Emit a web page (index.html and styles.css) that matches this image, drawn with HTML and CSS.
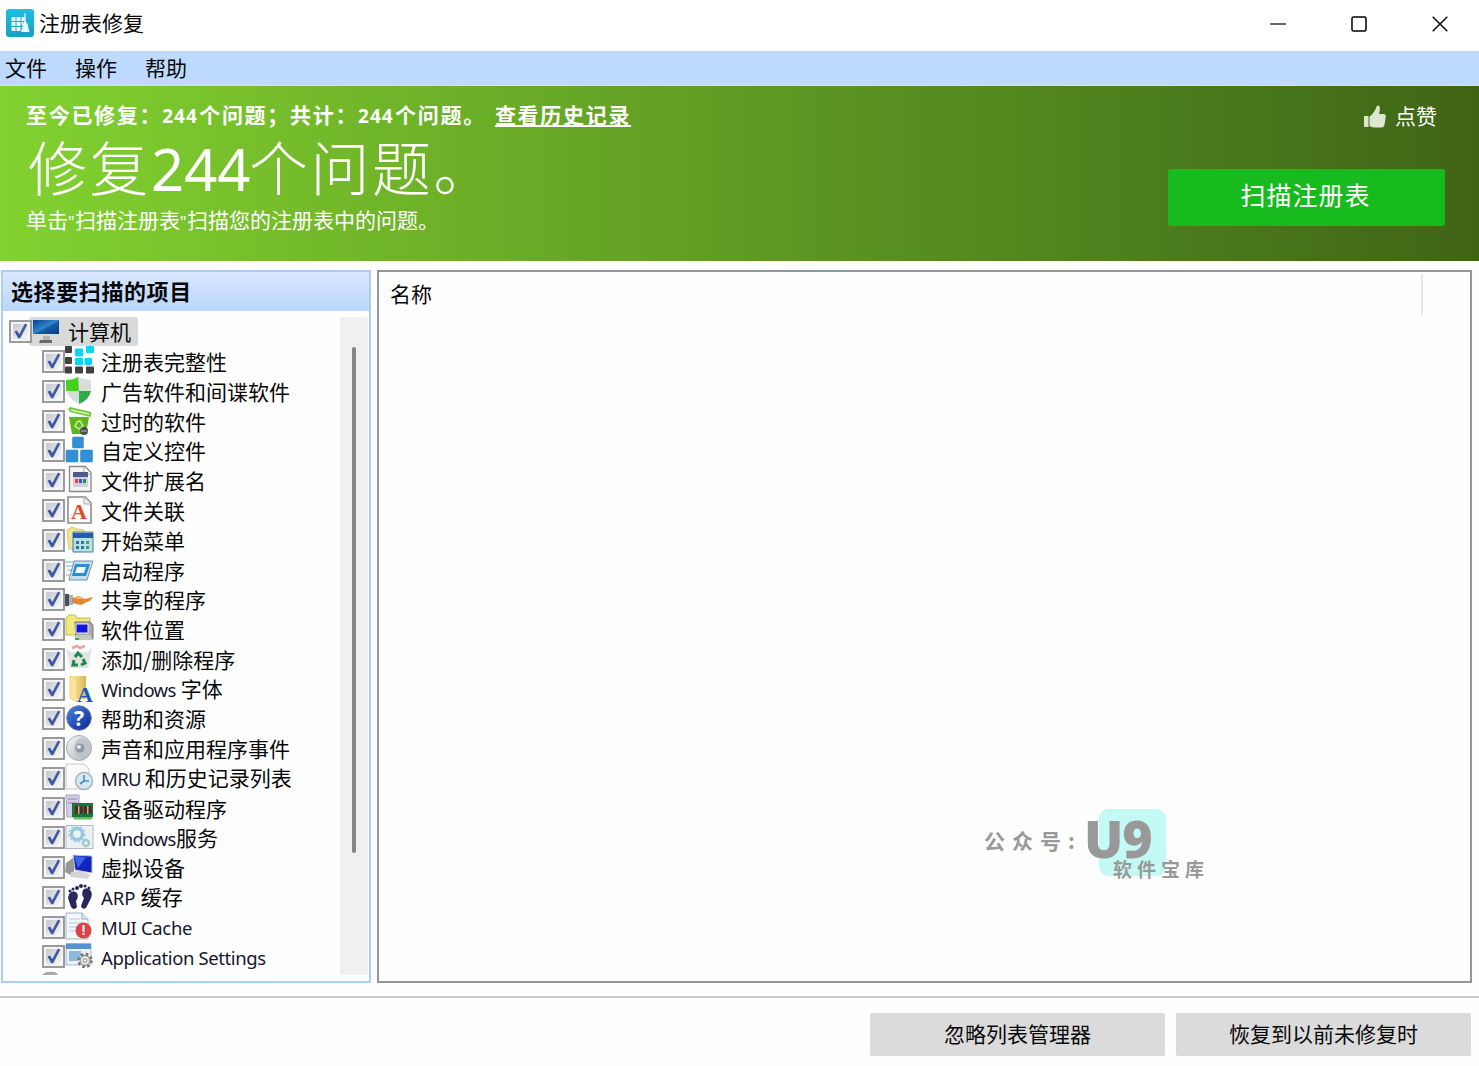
FILE: index.html
```html
<!DOCTYPE html>
<html lang="zh-CN">
<head>
<meta charset="utf-8">
<title>注册表修复</title>
<link rel="stylesheet" href="styles.css">
</head>
<body>
<svg class="defs" width="0" height="0" aria-hidden="true">
  <defs>
    <linearGradient id="boxfill" x1="0" y1="0" x2="1" y2="1"><stop offset="0" stop-color="#c3c7d0"/><stop offset="1" stop-color="#f8f8f9"/></linearGradient>
    <linearGradient id="screen" x1="0" y1="0" x2="1" y2="1"><stop offset="0" stop-color="#0d408f"/><stop offset=".5" stop-color="#3187d2"/><stop offset=".55" stop-color="#175da9"/><stop offset="1" stop-color="#0b3979"/></linearGradient>
    <linearGradient id="blue" x1="0" y1="0" x2="1" y2="1"><stop offset="0" stop-color="#4b86df"/><stop offset="1" stop-color="#052595"/></linearGradient>
    <linearGradient id="folder" x1="0" y1="0" x2="1" y2="0"><stop offset="0" stop-color="#fff2ae"/><stop offset="1" stop-color="#dcb650"/></linearGradient>
    <linearGradient id="silver" x1="0" y1="0" x2="1" y2="1"><stop offset="0" stop-color="#f3f4f5"/><stop offset="1" stop-color="#b0b6ba"/></linearGradient>
    <symbol id="check" viewBox="0 0 23 23">
      <rect x="1" y="1" width="21" height="21" fill="#f4f4f4" stroke="#929292" stroke-width="1.800"/>
      <rect x="4" y="4" width="15" height="15" fill="url(#boxfill)"/>
      <path d="M5.500 11.500l2.500-1 2.300 3.500L16 3.500l2.200 1.200-7 13.500H9.200z" fill="#41599f"/>
    </symbol>
  </defs>
</svg>
<div class="window">
  <header class="titlebar">
    <svg class="logo" viewBox="0 0 28 28"><defs><linearGradient id="lg" x2="0" y2="1"><stop stop-color="#1cc0dd"/><stop offset="1" stop-color="#1a9fc3"/></linearGradient></defs><rect width="28" height="28" rx="3" fill="url(#lg)"/><path d="M5.500 8h4v4h-4zM10.500 8h4v4h-4zM15.500 8h3v4h-3zM5.500 13h4v4h-4zM10.500 13h4v4h-4zM15.500 13h2v3h-2zM5.500 18h4v4h-4zM10.500 18h4v4h-4z" fill="#e8fbff"/><path d="M18.500 4h1l.4 9 1.600 2 2 8h-8.500l2-8 1.200-2z" fill="#e8fbff"/></svg>
    <h1 class="caption">注册表修复</h1>
    <div class="controls">
      <svg viewBox="0 0 16 16"><path d="M0 8h16" stroke="#000" stroke-width="1.200"/></svg>
      <svg viewBox="0 0 16 16"><rect x="1" y="1" width="14" height="14" rx="1.500" fill="none" stroke="#000" stroke-width="1.500"/></svg>
      <svg viewBox="0 0 16 16"><path d="M.7.7l14.600 14.600M15.300.7L.7 15.300" stroke="#000" stroke-width="1.400"/></svg>
    </div>
  </header>
  <nav class="menu"><span>文件</span><span>操作</span><span>帮助</span></nav>
  <section class="banner">
    <div class="status">
      <p class="summary">至今已修复：<span class="num">244</span>个问题；共计：<span class="num">244</span>个问题。<a class="history">查看历史记录</a></p>
      <p class="headline">修复<span class="bignum">244</span>个问题。</p>
      <p class="hint">单击<span class="quote">"</span>扫描注册表<span class="quote">"</span>扫描您的注册表中的问题。</p>
    </div>
    <div class="actions">
      <div class="like"><svg viewBox="0 0 22 23"><path d="M0 12q0-1 1-1h3.500v11H1q-1 0-1-1zM5.500 11.500C8 10 11 6 12 3q.7-3 2.500-2.500 2.500.8.500 8.500h5q2 0 1.800 2.500L20.500 20q-.6 2.500-3 2.500H11q-3 0-5.500-1.500z" fill="#dce6d1"/></svg><span>点赞</span></div>
      <button class="scan">扫描注册表</button>
    </div>
  </section>
  <main class="workspace">
    <aside class="panel">
      <h2 class="panel-head">选择要扫描的项目</h2>
      <div class="tree-wrap">
        <ul class="tree">
          <li class="root"><svg class="box"><use href="#check"/></svg><span class="selected"><svg class="icon" viewBox="0 0 28 28"><path d="M0 4h28v16H0z" fill="#d4d8dd"/><path d="M1 4h26v14H1z" fill="url(#screen)"/><path d="M11 20h7v5h-7z" fill="#b3b3b3"/><path d="M8 24h12v3H7z" fill="#686868"/></svg><b class="label">计算机</b></span></li>
          <li><svg class="box"><use href="#check"/></svg><svg class="icon" viewBox="0 0 28 28"><g fill="#414141"><rect y="0" width="7" height="7" rx="1"/><rect y="11" width="7" height="7" rx="1"/><rect y="20.500" width="7" height="7" rx="1"/><rect x="10" y="20.500" width="8" height="7" rx="1"/><rect x="21" y="20.500" width="8" height="7" rx="1"/></g><g fill="#08d5ff"><rect x="10" y="2.500" width="8" height="8" rx="1"/><rect x="21" y="0" width="8" height="7" rx="1"/><rect x="10" y="12" width="8" height="7" rx="1"/><rect x="19.500" y="12" width="7.500" height="7" rx="1"/></g></svg><b class="label">注册表完整性</b></li>
          <li><svg class="box"><use href="#check"/></svg><svg class="icon" viewBox="0 0 28 28"><path d="M1 4q8 0 12-3 6 3 13 3v9q-1 10-12 15Q2 22 1 13z" fill="#d8dcda"/><path d="M1 4q8 0 12-3l1 14H1.200z" fill="#42d11c"/><path d="M14 15h12q-2 9-12 13z" fill="#2dac47"/></svg><b class="label">广告软件和间谍软件</b></li>
          <li><svg class="box"><use href="#check"/></svg><svg class="icon" viewBox="0 0 28 28"><path d="M4 11h20l-3 17H7z" fill="#60b51b"/><path d="M3 3l2-2 21 5v5L5 6z" fill="#73c631"/><path d="M6 4l18 4" stroke="#dff3bd" stroke-width="1.500"/><path d="M12 16l3-1 3 5-4 3-4-3z" fill="none" stroke="#c8eda6" stroke-width="1.500"/><circle cx="19" cy="25" r="4" fill="#4b5148"/><path d="M16 25h6" stroke="#bbb"/></svg><b class="label">过时的软件</b></li>
          <li><svg class="box"><use href="#check"/></svg><svg class="icon" viewBox="0 0 28 28"><g fill="#3291d6" stroke="#237dbd" stroke-width=".5"><rect x="7.500" y="2" width="11" height="11" rx="1"/><rect x="1" y="15" width="12" height="12" rx="1"/><rect x="15.500" y="15" width="12" height="12" rx="1"/></g></svg><b class="label">自定义控件</b></li>
          <li><svg class="box"><use href="#check"/></svg><svg class="icon" viewBox="0 0 28 28"><path d="M4.500 1.500H20l6 6v19H4.500z" fill="#f4f4f4" stroke="#888" stroke-width="1.300"/><path d="M19 2v7h7" fill="#fff" stroke="#aaa"/><path d="M8 7h15v15H8z" fill="#cfd0dc"/><path d="M8 7h15v5H8z" fill="#51598a"/><path d="M10 14h3v4h-3z" fill="#e5462d"/><path d="M14 14h3v4h-3z" fill="#3352e2"/><path d="M18 14h3v4h-3z" fill="#238e44"/></svg><b class="label">文件扩展名</b></li>
          <li><svg class="box"><use href="#check"/></svg><svg class="icon" viewBox="0 0 28 28"><path d="M3 2h17l6 6v20H3z" fill="#fff" stroke="#8c8c8c" stroke-width="1.600"/><path d="M19 2v7h7" fill="#eee" stroke="#aaa"/><text x="14" y="23.500" class="letter red" text-anchor="middle">A</text></svg><b class="label">文件关联</b></li>
          <li><svg class="box"><use href="#check"/></svg><svg class="icon" viewBox="0 0 28 28"><path d="M2 5l5-3 5 2 7 1v19H4z" fill="#f0e68b" stroke="#cac789"/><path d="M8 7h20v20H8z" fill="#b5e1e5" stroke="#4b77b0"/><path d="M8 8h20v5H8z" fill="#245bb1"/><path d="M11 16h3v3h-3zM16 16h3v3h-3zM11 21h3v3h-3zM16 21h3v3h-3z" fill="#34759f"/><path d="M21 16h3v3h-3zM21 21h3v3h-3z" fill="#429f59"/></svg><b class="label">开始菜单</b></li>
          <li><svg class="box"><use href="#check"/></svg><svg class="icon" viewBox="0 0 28 28"><path d="M0 7h13M1 11h9M2 15h6M1 20h6" stroke="#b6d8e9" stroke-width="2"/><path d="M9 6h19l-6 19H4z" fill="#c6dfec" stroke="#7194ad"/><path d="M10 9h15l-4 12H7z" fill="#2e8cd2"/><path d="M12 12h9l-2 6h-9z" fill="#eef9ff"/></svg><b class="label">启动程序</b></li>
          <li><svg class="box"><use href="#check"/></svg><svg class="icon" viewBox="0 0 28 28"><path d="M0 10h4v12H0z" fill="#48505d"/><path d="M4 11h4v10H4z" fill="#a6b3c3"/><path d="M7 14l7-2 6 3 8-2q-2 4-6 5l-6 3-9-2z" fill="#df8637"/><path d="M7 14l7-2 6 3h-7z" fill="#f5b36c"/></svg><b class="label">共享的程序</b></li>
          <li><svg class="box"><use href="#check"/></svg><svg class="icon" viewBox="0 0 28 28"><path d="M1 4l3-3h6l2 3h13v17H1z" fill="#f2e97c" stroke="#c0b866"/><path d="M10 8h15l3 3v14H11z" fill="#aaa" stroke="#777"/><path d="M11 10h12v9H11z" fill="#1115dc" stroke="#eee"/><path d="M9 21h16l3 5H11z" fill="#c5c8c5"/><path d="M10 25h4" stroke="#29b445" stroke-width="2"/></svg><b class="label">软件位置</b></li>
          <li><svg class="box"><use href="#check"/></svg><svg class="icon" viewBox="0 0 28 28"><path d="M1 4l5 4h16l5-4-4 20H5z" fill="#e1e4e2"/><path d="M7 4l5-2 3 2 5-2" stroke="#eba995" stroke-width="2.500" fill="none"/><g fill="none" stroke="#208647" stroke-width="3"><path d="M10 13l3-4 4 4M18 15l2 4-4 2M13 21H8l1-5"/></g></svg><b class="label">添加/删除程序</b></li>
          <li><svg class="box"><use href="#check"/></svg><svg class="icon" viewBox="0 0 28 28"><path d="M5 2h16v23H8z" fill="url(#folder)"/><path d="M5 2l7 4v22l-7-4z" fill="#ffe69a" stroke="#dfbb60" stroke-width=".6"/><text x="20" y="28" class="letter blue" text-anchor="middle">A</text></svg><b class="label"><span class="latin windows">Windows</span>&nbsp;字体</b></li>
          <li><svg class="box"><use href="#check"/></svg><svg class="icon" viewBox="0 0 28 28"><circle cx="14" cy="15" r="12.300" fill="url(#blue)" stroke="#777e9b"/><text x="14" y="23" class="question" text-anchor="middle">?</text></svg><b class="label">帮助和资源</b></li>
          <li><svg class="box"><use href="#check"/></svg><svg class="icon" viewBox="0 0 28 28"><ellipse cx="14" cy="15" rx="12.500" ry="12.500" fill="url(#silver)" stroke="#a4adb2"/><ellipse cx="17" cy="15" rx="8" ry="10" fill="#bdc4ca"/><circle cx="15" cy="15" r="4.500" fill="#8b99a6"/><circle cx="14" cy="14" r="2" fill="#e5ebef"/></svg><b class="label">声音和应用程序事件</b></li>
          <li><svg class="box"><use href="#check"/></svg><svg class="icon" viewBox="0 0 28 28"><path d="M1 1h18l5 5v20H1z" fill="#fafafa" stroke="#c6c6c6"/><circle cx="19" cy="18" r="8.500" fill="#d5e8f1" stroke="#a8b3ba" stroke-width="1.500"/><path d="M19 12v6h5M19 18l-4 3" fill="none" stroke="#4f8dbb" stroke-width="1.600"/></svg><b class="label"><span class="latin mru">MRU</span>&nbsp;和历史记录列表</b></li>
          <li><svg class="box"><use href="#check"/></svg><svg class="icon" viewBox="0 0 28 28"><path d="M1 2h13v22H2z" fill="#d2cee5" stroke="#aaa3c2"/><path d="M3 6h9M3 10h9" stroke="#8d80ab"/><path d="M7 10h21v14H7z" fill="#17763b"/><path d="M10 13h3v8h-3zM14.500 13h3v8h-3zM19 13h3v8h-3zM23.500 13h3v8h-3z" fill="#5a2921"/><path d="M8 24h19v2.500H9z" fill="#67b95d"/><path d="M13.800 13v8M22.800 13v8" stroke="#e5dcad"/></svg><b class="label">设备驱动程序</b></li>
          <li><svg class="box"><use href="#check"/></svg><svg class="icon" viewBox="0 0 28 28"><path d="M1 3.500h27v23H1z" fill="#edf1f2" stroke="#b3b9bc"/><circle cx="12" cy="12" r="5.500" fill="none" stroke="#96c9de" stroke-width="3.500"/><circle cx="12" cy="12" r="8" fill="none" stroke="#a9d4e5" stroke-width="1.800" stroke-dasharray="2.500 2"/><circle cx="21" cy="21" r="3" fill="none" stroke="#a1c9d9" stroke-width="2.500"/></svg><b class="label"><span class="latin windows">Windows</span>服务</b></li>
          <li><svg class="box"><use href="#check"/></svg><svg class="icon" viewBox="0 0 28 28"><path d="M1 11l8-6v20l-9-5z" fill="#999"/><path d="M8 3l19 1v17l-17-3z" fill="#1026bd" stroke="#c8cbd0"/><path d="M9 4l12 1-8 11z" fill="#3b64e3"/><path d="M6 20l9-1 11 4-4 4-17-2z" fill="#d3d5d6"/></svg><b class="label">虚拟设备</b></li>
          <li><svg class="box"><use href="#check"/></svg><svg class="icon" viewBox="0 0 28 28"><g fill="#29285b"><path d="M4 12q4-5 8-1 2 4-1 8l1 6q-3 4-6 0L3 16zM18 8q4-4 8 1 2 4-1 9l-4 8q-4 2-5-2l3-8q-3-3-1-8z"/><circle cx="5" cy="9" r="1.500"/><circle cx="8" cy="7" r="1.500"/><circle cx="12" cy="6" r="2"/><circle cx="16" cy="4" r="2"/><circle cx="20" cy="4" r="1.600"/><circle cx="24" cy="6" r="1.500"/></g></svg><b class="label"><span class="latin arp">ARP</span>&nbsp;缓存</b></li>
          <li><svg class="box"><use href="#check"/></svg><svg class="icon" viewBox="0 0 28 28"><path d="M1 1h16l6 6v20H1z" fill="#f3f7fb" stroke="#a0b4ca"/><path d="M17 1v6h6" fill="#d9e6f3" stroke="#90aaca"/><path d="M4 7h11M4 11h15M4 15h10M4 19h7" stroke="#b8c5d5"/><circle cx="18.500" cy="18.500" r="8" fill="#d94449"/><path d="M17.500 13h2v7h-2zm0 8h2v2h-2z" fill="#fff"/></svg><b class="label"><span class="latin cache">MUI Cache</span></b></li>
          <li><svg class="box"><use href="#check"/></svg><svg class="icon" viewBox="0 0 28 28"><path d="M1 3h25v21H1z" fill="#eaf3fc" stroke="#a3b9d4"/><path d="M1 2.500h25V8H1z" fill="#5592d0"/><path d="M4 10h12v10H4z" fill="#8eb9dc"/><circle cx="20" cy="19.500" r="6.500" fill="#eee" stroke="#747474" stroke-width="2.500" stroke-dasharray="2.600 2.500"/><circle cx="20" cy="19.500" r="5" fill="#e4e4e4" stroke="#777"/><circle cx="20" cy="19.500" r="1.800" fill="#fff" stroke="#888"/></svg><b class="label"><span class="latin settings">Application Settings</span></b></li>
          <li><svg class="box partial" viewBox="0 0 23 23"><path d="M0 3q4-4 8-3 6-1 8 3z" fill="#aaa"/></svg></li>
        </ul>
        <div class="scrollbar"><div class="thumb"></div></div>
      </div>
    </aside>
    <section class="results">
      <div class="column-head"><span>名称</span><i class="separator"></i></div>
      <div class="watermark">
        <i class="wm-tile"></i>
        <span class="wm-prefix">公众号:</span>
        <span class="wm-logo">U9</span>
        <span class="wm-name">软件宝库</span>
      </div>
    </section>
  </main>
  <footer class="footer"><button>忽略列表管理器</button><button>恢复到以前未修复时</button></footer>
</div>
</body>
</html>
```
FILE: styles.css
```css
* { box-sizing: border-box; }
body { margin: 0; background: #fefefe; color: #080808; font: 21px/30px "Noto Sans CJK SC", sans-serif; }
h1, h2, p, ul { margin: 0; padding: 0; font-size: inherit; font-weight: 400; }
button { border: 0; padding: 0 0 3px; font: inherit; color: inherit; }
svg { display: block; flex: none; overflow: visible; }
.defs { position: absolute; }
.window { width: 1479px; height: 1066px; display: flex; flex-direction: column; overflow: hidden; white-space: nowrap; }

.titlebar { height: 51px; flex: none; display: flex; align-items: center; padding: 0 31px 4px 6px; background: #fff; }
.logo { width: 28px; height: 28px; margin-bottom: 1px; }
.caption { margin-left: 5px; padding-bottom: 3px; }
.controls { margin-left: auto; display: flex; gap: 65px; }
.controls svg { width: 16px; height: 16px; }

.menu { height: 35px; flex: none; display: flex; gap: 28px; padding: 1px 5px; background: #bfdaff; border-bottom: 1px solid #d8e8cd; }

.banner { height: 175px; flex: none; display: flex; justify-content: space-between; padding: 0 34px 0 26px; color: #fff; background: linear-gradient(90deg, #82d230, #76be2b 18%, #62a024 45%, #4b7b1c 80%, #3f6416); }
.summary { padding-top: 13px; font-size: 21px; line-height: 31px; font-weight: 700; letter-spacing: 1.7px; }
.num { display: inline-block; width: 37px; font: 700 19px "Noto Sans", sans-serif; letter-spacing: 1px; }
.history { margin-left: 9px; text-decoration: underline; text-underline-offset: 2px; }
.headline { height: 74px; padding-left: 2px; font-size: 59px; line-height: 71px; font-weight: 300; letter-spacing: 2.5px; }
.bignum { display: inline-block; width: 98px; font: 400 58px/71px "Noto Sans", sans-serif; letter-spacing: 0; }
.hint { line-height: 30px; }
.quote { display: inline-block; width: 7px; font-family: "Noto Sans", sans-serif; font-size: 16px; }
.actions { display: flex; flex-direction: column; align-items: flex-end; padding-top: 14px; }
.like { display: flex; align-items: center; gap: 9px; margin-right: 8px; height: 30px; }
.like svg { width: 22px; height: 23px; margin-top: 2px; }
.like span { padding-bottom: 1px; }
.scan { width: 277px; height: 57px; margin-top: 39px; padding: 0 2px 8px 0; border-radius: 3px; background: #17bb1e; color: #fff; font-size: 25px; letter-spacing: 1px; }

.workspace { height: 713px; margin-top: 9px; padding: 0 7px 0 1px; flex: none; display: flex; gap: 6px; }
.panel { width: 370px; border: 2px solid #aecdf6; background: #fefefe; }
.panel-head { height: 39px; padding-left: 8px; line-height: 36px; font-size: 22px; letter-spacing: .6px; font-weight: 700; background: linear-gradient(#dbe8fe, #b8d6ff); }
.tree-wrap { height: 659px; margin-top: 6px; display: flex; justify-content: space-between; padding-right: 1px; overflow: hidden; }
.tree { list-style: none; padding-left: 39px; overflow: hidden; }
.tree li { height: 29.780px; display: flex; align-items: center; }
.tree .root { margin-left: -33px; }
.selected { display: flex; align-items: center; height: 29px; margin-left: -3px; padding: 0 7px 0 3px; border-radius: 3px; background: #d9d9d9; }
.box { width: 23px; height: 23px; position: relative; z-index: 1; }
.partial { align-self: flex-start; }
.icon { width: 28px; height: 28px; margin-bottom: 3px; }
.label { margin-left: 8px; padding-bottom: 1px; font-weight: 400; line-height: 28px; }
.latin { display: inline-block; font: 18.500px/26px "Noto Sans", sans-serif; color: #17172c; }
.windows { width: 75px; letter-spacing: -.6px; }
.mru { width: 39px; letter-spacing: -.6px; }
.arp { width: 35px; }
.cache { letter-spacing: -.35px; }
.settings { letter-spacing: -.4px; }
.letter { font: 700 22px "Liberation Serif", serif; }
.red { fill: #e84622; }
.blue { fill: #1658bd; }
.question { font: 700 21px "Noto Sans", sans-serif; fill: #fff; }
.scrollbar { width: 28px; height: 658px; padding: 30px 12px 0; background: #f0f0f0; }
.thumb { width: 4px; height: 506px; border-radius: 2px; background: #858585; }

.results { position: relative; width: 1095px; border: 2px solid #92979e; background: #fefefe; }
.column-head { height: 45px; display: flex; justify-content: space-between; padding: 6px 47px 0 11px; }
.separator { width: 2px; height: 41px; margin-top: -4px; background: #e7e7e7; }
.watermark { position: absolute; left: 605px; top: 537px; width: 222px; height: 75px; color: #999; font-weight: 900; }
.watermark > * { position: absolute; }
.wm-tile { left: 115px; top: 0; width: 67px; height: 67px; border-radius: 9px; background: #c4faf5; }
.wm-prefix { left: 0; top: 16px; font-size: 21px; font-weight: 700; letter-spacing: 7px; }
.wm-logo { left: 100px; top: -6px; font: 800 52px/70px "Open Sans", sans-serif; letter-spacing: -1px; }
.wm-name { left: 129px; top: 45px; font-size: 19px; font-weight: 700; letter-spacing: 5px; }

.footer { height: 70px; margin-top: 13px; padding: 15px 8px 0; flex: none; display: flex; justify-content: flex-end; gap: 11px; border-top: 2px solid #c9c9c9; }
.footer button { width: 295px; height: 43px; border-radius: 2px; background: #dbdbdb; }
```
